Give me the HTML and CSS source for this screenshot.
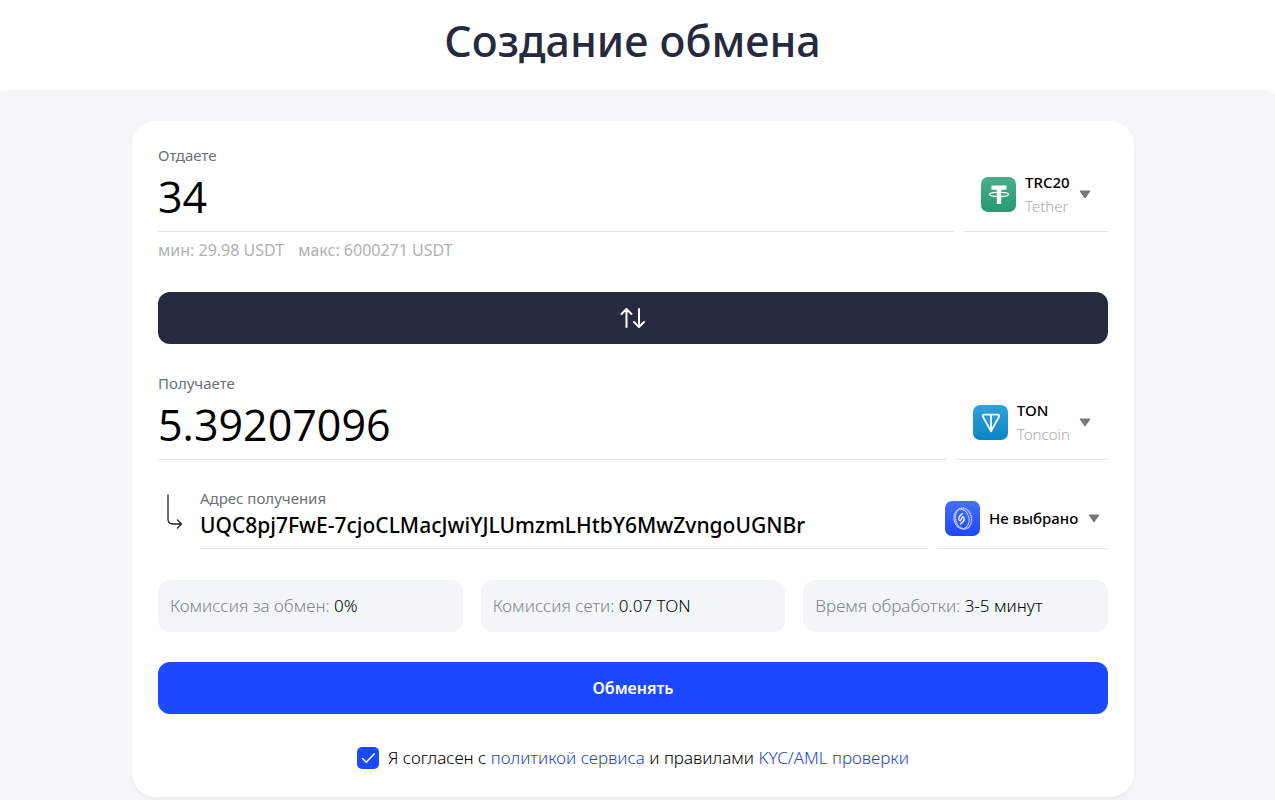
FILE: index.html
```html
<!DOCTYPE html>
<html lang="ru">
<head>
<meta charset="utf-8">
<meta name="viewport" content="width=device-width, initial-scale=1">
<title>Создание обмена</title>
<link rel="stylesheet" href="styles.css">
</head>
<body>
<header class="header"><h1 class="title">Создание обмена</h1></header>
<main class="main">
<form class="card">
  <section class="row">
    <div class="field">
      <label class="label" for="give">Отдаете</label>
      <input class="amount" id="give" type="text" value="34">
    </div>
    <div class="coin">
      <svg class="coin-icon" viewBox="0 0 35 35" aria-hidden="true">
        <defs><linearGradient id="gt" x1="0" y1="0" x2="0" y2="1"><stop offset="0" stop-color="#4bad8b"/><stop offset="1" stop-color="#249b73"/></linearGradient></defs>
        <rect width="35" height="35" rx="7" fill="url(#gt)"/>
        <path d="M10.500 8.500h15v4.200h-5.300v14.300h-4.400V12.700h-5.300z" fill="#fff"/>
        <path d="M15.800 15.300c-4.500.2-7.300 1-7.300 2 0 1.200 4 2.200 9.500 2.200s9.500-1 9.500-2.200c0-1-2.800-1.800-7.300-2" fill="none" stroke="#fff" stroke-width="1.300"/>
      </svg>
      <div class="coin-name">
        <select class="select" aria-label="Отдаваемая валюта"><option>TRC20</option></select>
        <span class="coin-sub">Tether</span>
      </div>
      <svg class="arrow" viewBox="0 0 12 9" aria-hidden="true"><path d="M1 1h10L6 8z" fill="#777" stroke="#777" stroke-linejoin="round"/></svg>
    </div>
  </section>
  <p class="limits"><span>мин: 29.98 USDT</span><span>макс: 6000271 USDT</span></p>
  <button class="bar swap" type="button" aria-label="Поменять направление">
    <svg class="swap-icon" viewBox="0 0 26 20" fill="none" stroke="#fff" stroke-width="2" stroke-linecap="round" stroke-linejoin="round" aria-hidden="true"><path d="M6.500 19V1M1.500 6L6.500 1l5 5M19 1v18M14 14l5 5 5-5"/></svg>
  </button>
  <section class="row receive">
    <div class="field">
      <label class="label" for="get">Получаете</label>
      <input class="amount" id="get" type="text" value="5.39207096">
    </div>
    <div class="coin">
      <svg class="coin-icon" viewBox="0 0 35 35" aria-hidden="true">
        <defs><linearGradient id="gn" x1="0" y1="0" x2="0" y2="1"><stop offset="0" stop-color="#33a0d8"/><stop offset="1" stop-color="#0986c7"/></linearGradient></defs>
        <rect width="35" height="35" rx="7" fill="url(#gn)"/>
        <path d="M11.500 9.700h13q2.500 0 1.300 2.300L18 26.300 10.200 12q-1.200-2.300 1.300-2.300zM18 10v15" fill="none" stroke="#fff" stroke-width="1.800" stroke-linejoin="round"/>
      </svg>
      <div class="coin-name">
        <select class="select" aria-label="Получаемая валюта"><option>TON</option></select>
        <span class="coin-sub">Toncoin</span>
      </div>
      <svg class="arrow" viewBox="0 0 12 9" aria-hidden="true"><path d="M1 1h10L6 8z" fill="#777" stroke="#777" stroke-linejoin="round"/></svg>
    </div>
  </section>
  <section class="row address-row">
    <svg class="hook" viewBox="0 0 16 36" fill="none" stroke="#222" stroke-width="1.300" stroke-linecap="round" stroke-linejoin="round" aria-hidden="true"><path d="M1 1v24q0 5 5 5h8M10.500 26l4 4-4 4"/></svg>
    <div class="field">
      <label class="label" for="address">Адрес получения</label>
      <input class="address" id="address" type="text" value="UQC8pj7FwE-7cjoCLMacJwiYJLUmzmLHtbY6MwZvngoUGNBr">
    </div>
    <div class="coin wallet">
      <svg class="coin-icon" viewBox="0 0 35 35" aria-hidden="true">
        <defs><linearGradient id="gw" x1="0" y1="0" x2="0" y2="1"><stop offset="0" stop-color="#4770ff"/><stop offset="1" stop-color="#1b47fb"/></linearGradient></defs>
        <rect width="35" height="35" rx="7" fill="url(#gw)"/>
        <g fill="none" stroke="#c7d3ff" transform="rotate(-12 17 18)">
          <ellipse cx="18.500" cy="17.800" rx="8" ry="10.500" stroke-width="1.600" stroke-dasharray="1.300 .5"/>
          <ellipse cx="16.500" cy="17.800" rx="7.500" ry="10"/>
          <path d="M19 12.500l-4 2.500q-2.500 3 0 4.500l3-3.500M14 23l4-2.500q2.500-3 0-4.500l-3 3.500" stroke="#fff" stroke-width="1.300"/>
        </g>
      </svg>
      <select class="select" aria-label="Кошелек"><option>Не выбрано</option></select>
      <svg class="arrow" viewBox="0 0 12 9" aria-hidden="true"><path d="M1 1h10L6 8z" fill="#777" stroke="#777" stroke-linejoin="round"/></svg>
    </div>
  </section>
  <div class="chips">
    <p class="chip">Комиссия за обмен: <span class="value">0%</span></p>
    <p class="chip">Комиссия сети: <span class="value">0.07 TON</span></p>
    <p class="chip">Время обработки: <span class="value">3-5 минут</span></p>
  </div>
  <button class="bar submit" type="submit">Обменять</button>
  <div class="agree">
    <span class="check">
      <input class="check-input" id="agree" type="checkbox" checked>
      <svg class="check-mark" viewBox="0 0 22 22" fill="none" stroke="#fff" stroke-width="1.500" stroke-linecap="round" stroke-linejoin="round" aria-hidden="true"><path d="M5.500 11.500l3.800 3.800 8-8.500"/></svg>
    </span>
    <label for="agree">Я согласен с <a class="link" href="#policy">политикой сервиса</a> и правилами <a class="link" href="#aml">KYC/AML проверки</a></label>
  </div>
</form>
</main>
</body>
</html>
```

FILE: styles.css
```css
* { box-sizing: border-box; }
body {
  margin: 0;
  background: #fff;
  color: #000;
  font: 16px/24px "Noto Sans", "Open Sans", sans-serif;
}
input, select, button { font: inherit; color: inherit; }
p, h1 { margin: 0; }
.header { padding: 9px 10px 17px 0; text-align: center; }
.title { color: #252a3f; font-size: 43px; line-height: 64px; font-weight: 500; }
.main {
  min-height: calc(100vh - 90px);
  padding: 31px 141px 3px 132px;
  background: #f5f6f8;
  border-radius: 6px 14px 0 0 / 2px 6px 0 0;
}
.card {
  padding: 24px 26px;
  background: #fff;
  border-radius: 24px;
  box-shadow: 0 3px 3px rgba(0, 0, 0, .04);
}
.row { display: flex; gap: 9px; }
.field {
  display: flex;
  flex: 1;
  flex-direction: column;
  min-width: 0;
  border-bottom: 1px solid #e3e4e6;
}
.label { color: #6c7076; font-size: 15px; line-height: 20px; }
.amount, .address {
  width: 100%;
  padding: 0;
  border: 0;
  outline: 0;
  background: none;
}
.amount { height: 66px; padding-bottom: 4px; font-family: "Open Sans", "Noto Sans", sans-serif; font-size: 43px; }
.address { height: 40px; padding-bottom: 6px; font-size: 21px; font-weight: 500; }
.coin {
  display: flex;
  align-items: center;
  gap: 9px;
  padding: 12px 17px 0;
  border-bottom: 1px solid #e3e4e6;
}
.coin-icon { width: 35px; height: 35px; }
.coin-name { display: flex; flex-direction: column; align-items: flex-start; }
.select {
  padding: 0;
  border: 0;
  background: none;
  appearance: none;
  font-size: 15px;
  line-height: 24px;
  font-weight: 500;
}
.coin-sub { color: #aaaaac; font-size: 15px; font-weight: 300; }
.arrow { width: 12px; height: 9px; }
.limits { display: flex; gap: 14px; padding-top: 6px; color: #aeb1b5; }
.bar {
  display: flex;
  align-items: center;
  justify-content: center;
  width: 100%;
  height: 52px;
  border: 0;
  border-radius: 12px;
  color: #fff;
  font-weight: 600;
}
.swap { margin: 30px 0 29px; background: #252a3f; }
.swap-icon { width: 26px; height: 20px; }
.address-row { margin-top: 28px; }
.hook { width: 16px; height: 36px; margin: 6px 8px 0 9px; }
.wallet { padding: 0 8px; }
.chips { display: grid; grid-template-columns: repeat(3, 1fr); gap: 18px; margin: 31px 0 30px; }
.chip {
  padding: 14px 12px;
  border-radius: 12px;
  background: #f3f6f7;
  color: #7f858c;
  font-size: 17px;
  font-weight: 300;
}
.value { color: #000; }
.submit { background: #1a49ff; }
.agree {
  display: flex;
  align-items: center;
  justify-content: center;
  gap: 9px;
  margin: 32px 0 3px;
  font-size: 17px;
  font-weight: 300;
}
.check { display: grid; width: 22px; height: 22px; }
.check-input {
  grid-area: 1 / 1;
  width: 22px;
  height: 22px;
  margin: 0;
  border-radius: 5px;
  background: #1a49ff;
  appearance: none;
}
.check-mark { grid-area: 1 / 1; pointer-events: none; }
.link { color: #2444d4; text-decoration: none; }
```
